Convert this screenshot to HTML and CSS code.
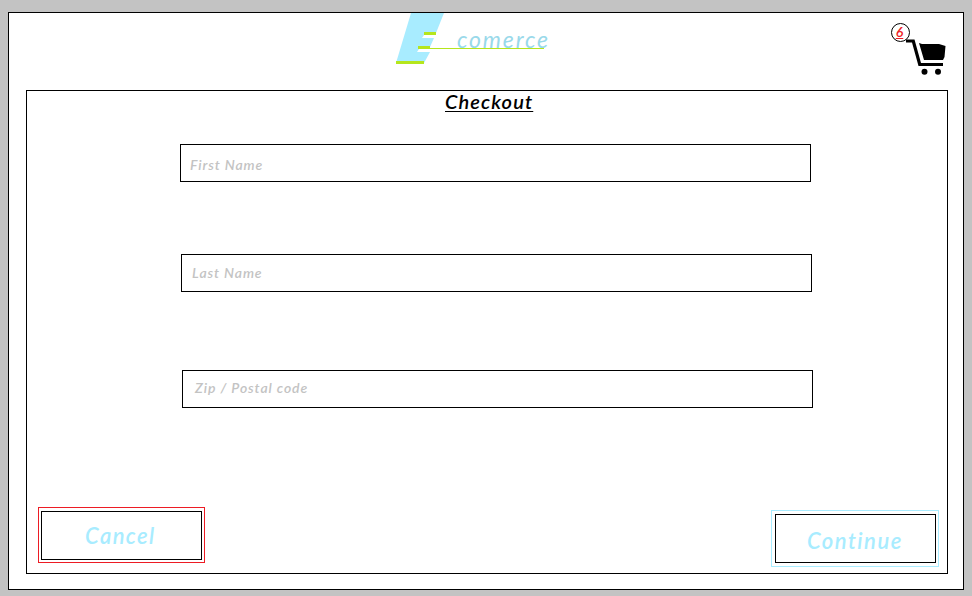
FILE: index.html
```html
<!DOCTYPE html>
<html lang="en">
<head>
<meta charset="utf-8">
<title>Checkout</title>
<link rel="stylesheet" href="styles.css">
</head>
<body>
<main class="page">
  <header class="header">
    <svg class="logo" width="160" height="56" viewBox="0 0 160 56" role="img" aria-label="E comerce">
      <path class="logo-e" d="M15 0H48L40 20V22H28L26 25H38L34 34V36H23L21 39H34L28 50H0Z"/>
      <text class="logo-text" x="61" y="35" textLength="91">comerce</text>
      <path class="logo-bar" d="M28 19H40V22H28ZM22 33H34V36H22ZM0 48H28V51H0ZM34 35H148V36H34Z"/>
    </svg>
    <div class="cart">
      <svg width="56" height="56" viewBox="891 22 56 56" aria-hidden="true">
        <path d="M906 39.5H914.5L921 63H943V66H918.5L912 42.5H906ZM919 43L922 44H939L945.5 46L944.5 57L943 60H924Z"/>
        <circle cx="924.5" cy="71.7" r="3"/>
        <circle cx="938" cy="71.7" r="3"/>
        <circle class="badge-ring" cx="900.5" cy="32.5" r="9"/>
      </svg>
      <span class="count">6</span>
    </div>
  </header>
  <section class="panel">
    <h1 class="title">Checkout</h1>
    <div class="field first">First Name</div>
    <div class="field last">Last Name</div>
    <div class="field zip">Zip / Postal code</div>
    <footer class="actions">
      <div class="button cancel"><span>Cancel</span></div>
      <div class="button continue"><span>Continue</span></div>
    </footer>
  </section>
</main>
</body>
</html>
```
FILE: styles.css
```css
* { box-sizing: border-box; }
body {
  margin: 0;
  height: 596px;
  padding: 12px 8px 6px;
  background: #c3c3c3;
  font-family: "Segoe Print", "Ink Free", Lato, sans-serif;
  font-style: italic;
  overflow: hidden;
}
.page {
  width: 956px;
  height: 578px;
  padding: 0 15px 15px 17px;
  border: 1px solid #000;
  background: #fff;
}
.header {
  display: flex;
  justify-content: space-between;
  height: 77px;
  padding: 0 1px 0 370px;
}
.logo { display: block; }
.logo-e { fill: #a8ecff; }
.logo-bar { fill: #b5e61d; shape-rendering: crispEdges; }
.logo-text { fill: #99d9ea; font-size: 23px; font-weight: 400; }
.cart { position: relative; width: 56px; height: 56px; margin-top: 9px; }
.cart svg { display: block; }
.badge-ring { fill: #fff; stroke: #000; stroke-width: 1; }
.count {
  position: absolute;
  left: 4px;
  top: 2px;
  width: 9px;
  text-align: center;
  font-size: 14px;
  line-height: 16px;
  font-weight: 600;
  color: #ed1c24;
  text-decoration: underline;
}
.panel {
  width: 922px;
  height: 484px;
  border: 1px solid #000;
}
.title {
  margin: 0 0 29px;
  padding-left: 418px;
  height: 24px;
  font-size: 20px;
  line-height: 21px;
  font-weight: 600;
  letter-spacing: 1.1px;
  text-decoration: underline;
  text-decoration-thickness: 1px;
  text-underline-offset: 2px;
}
.field {
  width: 631px;
  height: 38px;
  border: 1px solid #000;
  font-size: 14px;
  line-height: 40px;
  font-weight: 600;
  letter-spacing: .9px;
  color: #c3c3c3;
}
.first { margin-left: 153px; padding-left: 9px; }
.last { margin: 72px 0 0 154px; padding-left: 10px; line-height: 36px; }
.zip { margin: 78px 0 0 155px; padding-left: 12px; line-height: 34px; }
.actions {
  display: flex;
  justify-content: space-between;
  margin-top: 99px;
  padding: 0 8px 0 11px;
}
.button { border: 1px solid; color: #a8ecff; }
.button span {
  display: block;
  width: 161px;
  height: 49px;
  border: 1px solid #000;
  font-size: 22px;
  line-height: 48px;
  font-weight: 600;
  letter-spacing: 1.4px;
}
.cancel { width: 167px; height: 56px; padding: 3px 2px; border-color: #ed1c24; }
.cancel span { padding-left: 43px; }
.continue { width: 168px; height: 57px; margin-top: 3px; padding: 3px; border-color: #a8ecff; }
.continue span { padding-left: 31px; line-height: 52px; letter-spacing: 1.5px; }
```
